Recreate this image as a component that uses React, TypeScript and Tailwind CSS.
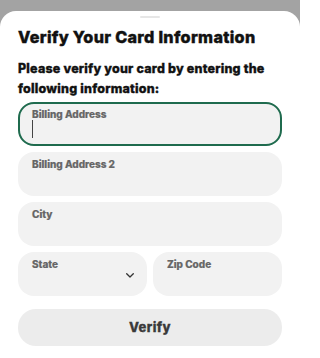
import React from "react";

function Field({ label, focused, className = "", children }: { label: string; focused?: boolean; className?: string; children?: React.ReactNode }) {
  return (
    <div
      className={`relative h-[44px] rounded-[16px] bg-[#f2f2f2] ${focused ? "border-2 border-[#1f6b4e]" : ""} ${className}`}
    >
      <div className={`absolute ${focused ? "top-[4px] left-[12px]" : "top-[6px] left-[14px]"} text-[10px] font-extrabold text-[#666] leading-[12px] [-webkit-text-stroke:0.2px_#666]`}>
        {label}
      </div>
      {children}
    </div>
  );
}

export default function App() {
  return (
    <div className="w-[300px] h-[358px] bg-[#a3a3a3] pt-[11px] overflow-hidden" style={{ fontFamily: "Inter, 'Liberation Sans', sans-serif" }}>
      <div className="h-full bg-white rounded-t-[16px] px-[18px] flex flex-col">
        <div className="mx-auto mt-[5px] h-[2px] w-[20px] rounded-full bg-[#e6e6e6]" />
        <h1 className="mt-[8px] text-[16.2px] leading-[22px] font-extrabold text-[#111] tracking-[0.3px] [-webkit-text-stroke:0.4px_#111]">Verify Your Card Information</h1>
        <p className="mt-[11px] text-[12.5px] leading-[20px] font-extrabold text-[#111] tracking-[0.2px] [-webkit-text-stroke:0.35px_#111]">
          Please verify your card by entering the following information:
        </p>
        <div className="mt-[3px] flex flex-col gap-[6px]">
          <Field label="Billing Address" focused>
            <div className="absolute left-[12px] top-[16px] h-[18px] w-[1px] bg-[#444]" />
          </Field>
          <Field label="Billing Address 2" />
          <Field label="City" />
          <div className="flex gap-[6px]">
            <Field label="State" className="flex-1">
              <svg className="absolute left-[108px] top-[21px]" width="8" height="5" viewBox="0 0 8 5" fill="none">
                <path d="M0.7 0.7L4 4L7.3 0.7" stroke="#333" strokeWidth="1.3" strokeLinecap="round" strokeLinejoin="round" />
              </svg>
            </Field>
            <Field label="Zip Code" className="flex-1" />
          </div>
        </div>
        <button className="mt-[13px] h-[37px] w-full rounded-[18px] bg-[#ececec] text-[13px] font-extrabold text-[#3a3a3a] tracking-[0.4px] [-webkit-text-stroke:0.3px_#3a3a3a]">
          Verify
        </button>
      </div>
    </div>
  );
}
